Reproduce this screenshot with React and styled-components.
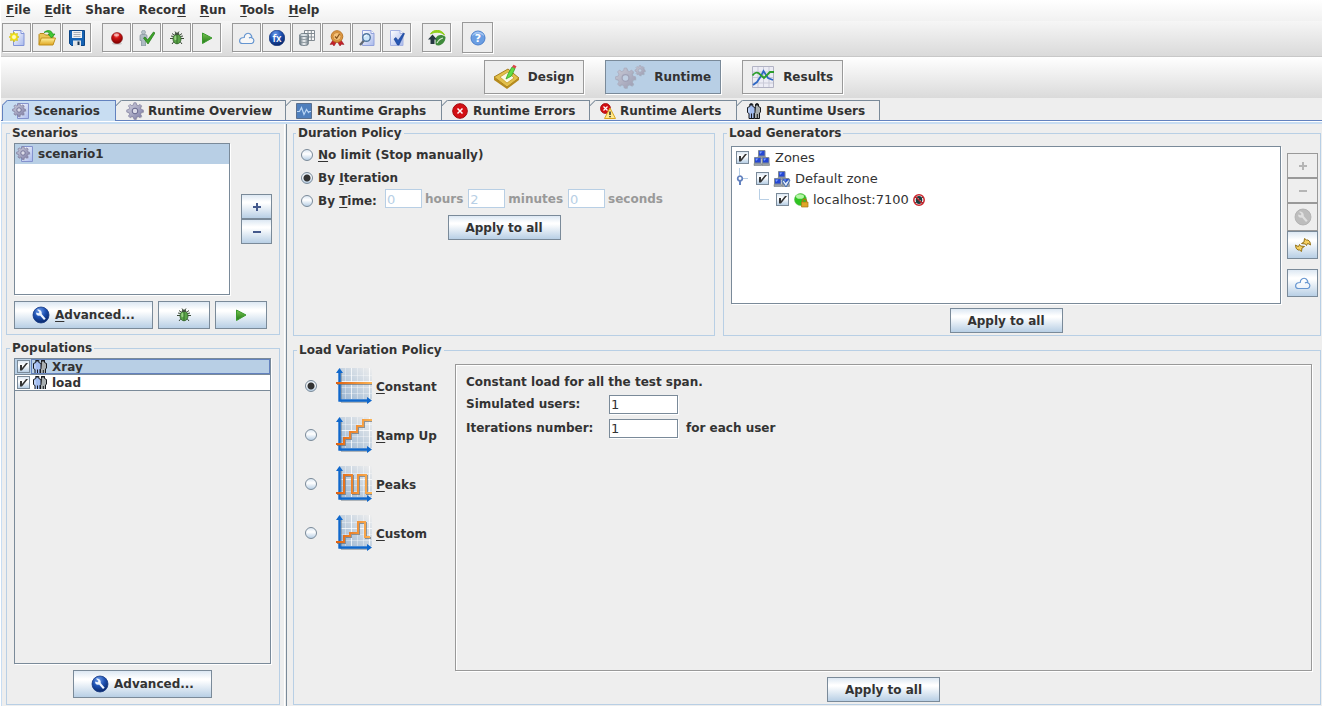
import React, { useState } from "react";
import styled, { createGlobalStyle, css } from "styled-components";

const GlobalStyle = createGlobalStyle`
  * { box-sizing: border-box; }
  body {
    margin: 0;
    background: #fff;
    color: #333;
    font: bold 12px/16px "DejaVu Sans", sans-serif;
  }
  button, input { font: inherit; color: inherit; }
  u { text-decoration-thickness: 1px; text-underline-offset: 2px; }
  svg { display: block; flex: none; }
`;

const line = "#7a8a99";
const pale = "#b8cfe5";
const grey = "#eeeeee";

/* ---------- layout ---------- */

const Page = styled.div`
  min-height: 100vh;
  display: flex;
  flex-direction: column;
  padding: 0 13px 4px 1px;
`;

const MenuBar = styled.nav`
  display: flex;
  align-items: flex-start;
  gap: 14px;
  height: 21px;
  padding: 2px 5px;
  background: linear-gradient(#fff, #f1f1f1);
`;

const MenuItem = styled.button`
  padding: 0;
  border: 0;
  background: none;
  line-height: 16px;
`;

const ToolBar = styled.div`
  display: flex;
  align-items: center;
  gap: 11px;
  height: 36px;
  padding: 0 1px 2px;
  background: linear-gradient(#f6f6f6, #dadada);
  border-bottom: 1px solid #c8c8c8;
`;

const ToolGroup = styled.div`
  display: flex;
  gap: 1px;
`;

const ToolButton = styled.button`
  display: grid;
  place-items: center;
  width: ${(p) => (p.$large ? 31 : 29)}px;
  height: ${(p) => (p.$large ? 31 : 29)}px;
  padding: 0;
  background: ${grey};
  border: 1px solid #999;
  box-shadow: 1px 1px #fff;
`;

const ModeBar = styled.div`
  display: flex;
  justify-content: center;
  align-items: center;
  gap: 21px;
  height: 41px;
  padding: 0 0 2px 4px;
  background: linear-gradient(#fff, #dadada);
`;

const ModeButton = styled.button`
  display: flex;
  align-items: center;
  gap: 8px;
  height: 34px;
  padding: 0 9px 0 8px;
  background: ${(p) => (p.$active ? pale : grey)};
  border: 1px solid ${(p) => (p.$active ? line : "#999")};
  box-shadow: 1px 1px #fff;
`;

const TabStrip = styled.div`
  display: flex;
  padding: 2px 0 0 1px;
  background: ${grey};
  border-bottom: 1px solid #6382bf;
`;

const Tab = styled.button`
  --edge: ${(p) => (p.$active ? "#6382bf" : line)};
  display: flex;
  align-items: center;
  gap: 4px;
  min-width: ${(p) => p.$w}px;
  height: 20px;
  padding: 1px 8px 0 10px;
  border: 0;
  border-right: 1px solid var(--edge);
  background:
    linear-gradient(135deg, ${grey} 0 3px, var(--edge) 4px, transparent 5px) 0 0 / 6px 6px no-repeat,
    linear-gradient(var(--edge), var(--edge)) 6px 0 / 100% 1px no-repeat,
    ${(p) => (p.$active ? "linear-gradient(#6382bf, #6382bf) 0 6px / 1px 100% no-repeat, #c8ddf2" : grey)};
  ${(p) => p.$active && css`
    height: 21px;
    margin-bottom: -1px;
    padding-bottom: 1px;
  `}
`;

const TabBody = styled.main`
  flex: 1;
  display: flex;
  background: ${grey};
  border-left: 1px solid #c8ddf2;
`;

const TabEdge = styled.div`
  height: 3px;
  border-top: 1px solid #fff;
  background: #c8ddf2;
`;

const Side = styled.aside`
  width: 282px;
  flex: none;
  display: flex;
  flex-direction: column;
  gap: 5px;
  padding: 1px 4px;
`;

const Divider = styled.div`
  width: 3px;
  flex: none;
  border-left: 1px solid #fff;
  border-right: 1px solid ${line};
`;

const Main = styled.section`
  flex: 1;
  min-width: 0;
  display: flex;
  flex-direction: column;
  gap: 6px;
  padding: 1px 1px 1px 6px;
`;

const Columns = styled.div`
  display: grid;
  grid-template-columns: 422fr 598fr;
  gap: 8px;
`;

const Group = styled.fieldset`
  display: flex;
  flex-direction: column;
  gap: 6px;
  min-width: 0;
  margin: 0;
  padding: ${(p) => p.$pad || "2px 8px 6px 7px"};
  border: 1px solid ${pale};
  ${(p) => p.$fill && "flex: 1;"}
  > legend {
    margin-left: -4px;
    padding: 0 2px;
  }
`;

const Row = styled.div`
  display: flex;
  align-items: ${(p) => p.$align || "center"};
  gap: ${(p) => p.$gap || 0}px;
  ${(p) => p.$fill && "flex: 1;"}
`;

const Stack = styled.div`
  display: flex;
  flex-direction: column;
  gap: ${(p) => p.$gap || 0}px;
  ${(p) => p.$fill && "flex: 1; min-width: 0;"}
  ${(p) => p.$top && `padding-top: ${p.$top}px;`}
`;

/* ---------- controls ---------- */

const Button = styled.button`
  display: flex;
  align-items: center;
  justify-content: center;
  gap: 5px;
  width: ${(p) => p.$w}px;
  height: ${(p) => p.$h || 28}px;
  padding: 0;
  border: 1px solid ${line};
  background: linear-gradient(#dde8f3, #fff 30%, #fff 35%, ${pale});
  &:disabled {
    color: #b5b5b5;
    border-color: #999;
    background: ${grey};
  }
`;

const SquareButton = styled(Button)`
  color: #44598c;
  margin-top: ${(p) => (p.$apart ? 10 : 0)}px;
`;

const ListBox = styled.ul`
  width: ${(p) => (p.$w ? p.$w + "px" : "auto")};
  height: ${(p) => (p.$h ? p.$h + "px" : "auto")};
  ${(p) => p.$fill && "flex: 1;"}
  margin: 0;
  padding: 0;
  list-style: none;
  background: ${(p) => (p.$plain ? grey : "#fff")};
  border: 1px solid ${line};
  box-shadow: 1px 1px #fff;
`;

const ScenarioItem = styled.li`
  display: flex;
  align-items: center;
  gap: 4px;
  height: 20px;
  padding: 0 1px;
  background: ${pale};
`;

const PopulationItem = styled.li`
  border-bottom: 1px solid ${line};
  background: ${(p) => (p.$active ? pale : "#fff")};
  label {
    display: flex;
    align-items: center;
    gap: 1px;
    height: 15px;
    padding-left: 2px;
  }
`;

const PopulationName = styled.span`
  flex: 1;
  display: flex;
  align-items: center;
  gap: 4px;
  height: 15px;
  padding-left: 1px;
  overflow: hidden;
  border: 1px solid ${(p) => (p.$active ? "#6382bf" : "transparent")};
`;

const Radio = styled.input.attrs({ type: "radio" })`
  appearance: none;
  flex: none;
  width: 12px;
  height: 12px;
  margin: 0;
  border: 1px solid ${line};
  border-radius: 50%;
  background: linear-gradient(#dde8f3, #fff 40%, ${pale});
  &:checked {
    background: radial-gradient(circle, #333 0 3px, transparent 4px), linear-gradient(#dde8f3, #fff 40%, ${pale});
  }
`;

const RadioLabel = styled.label`
  display: flex;
  align-items: center;
  gap: 5px;
  height: 23px;
`;

const CheckFrame = styled.span`
  position: relative;
  display: block;
  flex: none;
  width: 13px;
  height: 13px;
  input {
    appearance: none;
    display: block;
    width: 13px;
    height: 13px;
    margin: 0;
    border: 1px solid ${line};
    background: linear-gradient(#dde8f3, #fff 40%, ${pale});
  }
  svg {
    position: absolute;
    inset: 0;
    pointer-events: none;
    visibility: hidden;
  }
  input:checked + svg { visibility: visible; }
`;

const Field = styled.input`
  width: ${(p) => p.$w}px;
  height: 19px;
  padding: 1px 1px 0;
  border: 1px solid ${line};
  border-radius: 0;
  background: #fff;
  box-shadow: 1px 1px #fff;
  font-size: 13px;
  font-weight: normal;
  &:disabled {
    color: ${pale};
    border-color: ${pale};
    box-shadow: none;
  }
`;

const TimeLabel = styled.label`
  display: flex;
  align-items: center;
  gap: 3px;
  height: 19px;
  color: #999;
`;

const TimeRow = styled.div`
  display: flex;
  align-items: flex-start;
  gap: 5px;
  height: 20px;
  > ${TimeLabel}:nth-child(2) { margin-left: 3px; }
`;

const DurationOptions = styled(Stack)`
  padding-left: 1px;
`;

const Centered = styled.div`
  display: flex;
  justify-content: center;
`;

const Tree = styled.ul`
  height: 158px;
  margin: 0;
  padding: 0 4px;
  list-style: none;
  background: #fff;
  border: 1px solid ${line};
  box-shadow: 1px 1px #fff;
  font-size: 13px;
  font-weight: normal;
`;

const TreeItem = styled.li`
  display: flex;
  align-items: center;
  height: 21px;
  padding-left: ${(p) => (p.$depth ? (p.$depth - 1) * 20 : 0)}px;
  label {
    display: flex;
    align-items: center;
    gap: 4px;
  }
`;

const Shapes = styled.div`
  width: 154px;
  flex: none;
  display: flex;
  flex-direction: column;
  padding: 1px 0 0 4px;
`;

const ShapeLabel = styled.label`
  display: flex;
  align-items: center;
  height: 49px;
  span { padding: 2px 0 0 4px; }
  svg { margin-left: 19px; }
`;

const Detail = styled.div`
  flex: 1;
  padding: 9px 10px;
  border: 1px solid #999;
  box-shadow: 1px 1px #fff, inset 1px 1px #fff;
`;

const DetailGrid = styled.div`
  display: grid;
  grid-template-columns: 143px 69px auto;
  grid-auto-rows: 24px;
  align-items: center;
  margin-top: 2px;
  > span { padding-left: 8px; }
`;

/* ---------- icons ---------- */

const Defs = () => (
  <svg width="0" height="0" style={{ position: "absolute" }} aria-hidden="true">
    <defs>
      <linearGradient id="pageFill" x1="0" y1="0" x2="1" y2="1"><stop stopColor="#fff" /><stop offset="1" stopColor="#a9b9ec" /></linearGradient>
      <linearGradient id="gearFill" x1="0" y1="0" x2="1" y2="1"><stop stopColor="#d2d2de" /><stop offset="1" stopColor="#7c7ca6" /></linearGradient>
      <linearGradient id="gearLight" x1="0" y1="0" x2="1" y2="1"><stop stopColor="#c9cad6" /><stop offset="1" stopColor="#9a9cb2" /></linearGradient>
      <linearGradient id="greenFill" x1="0" y1="0" x2="0" y2="1"><stop stopColor="#79c351" /><stop offset="1" stopColor="#217a17" /></linearGradient>
      <radialGradient id="blueBall" cx=".4" cy=".25" r=".8"><stop stopColor="#6d9cea" /><stop offset=".5" stopColor="#1c4fb0" /><stop offset="1" stopColor="#07225f" /></radialGradient>
      <radialGradient id="redBall" cx=".45" cy=".25" r=".7"><stop stopColor="#ff8d84" /><stop offset=".4" stopColor="#cf1414" /><stop offset="1" stopColor="#860000" /></radialGradient>
      <linearGradient id="goldFill" x1="0" y1="0" x2="0" y2="1"><stop stopColor="#fff3a0" /><stop offset="1" stopColor="#dfa520" /></linearGradient>
      <linearGradient id="metalFill"><stop stopColor="#687680" /><stop offset=".5" stopColor="#f2f5f7" /><stop offset="1" stopColor="#76838c" /></linearGradient>
      <linearGradient id="plotFill" x1="1" y1="0" x2="0" y2="1"><stop stopColor="#eeeeee" /><stop offset=".5" stopColor="#c6d3e0" /><stop offset="1" stopColor="#98b4d2" /></linearGradient>
      <linearGradient id="traceFill" gradientUnits="userSpaceOnUse" x1="0" y1="0" x2="36" y2="0"><stop stopColor="#e0600e" /><stop offset="1" stopColor="#fbb455" /></linearGradient>
    </defs>
  </svg>
);

const Svg = ({ s = 16, w = s, h = s, children }) => (
  <svg width={w} height={h} viewBox={`0 0 ${w} ${h}`} fill="none" aria-hidden="true">{children}</svg>
);

/* An eight-toothed wheel: every tooth takes four points of the outline. */
const gearPath = (x, y, r) => {
  const points = [];
  for (let tooth = 0; tooth < 8; tooth += 1) {
    [[-0.3, 0.76], [-0.17, 1], [0.17, 1], [0.3, 0.76]].forEach(([turn, reach]) => {
      const angle = ((tooth + turn) * Math.PI) / 4;
      points.push(`${(x + r * reach * Math.cos(angle)).toFixed(2)} ${(y + r * reach * Math.sin(angle)).toFixed(2)}`);
    });
  }
  return `M${points.join("L")}Z`;
};

const Gear = ({ x, y, r, light }) => (
  <g>
    <path d={gearPath(x + 0.8, y + 0.8, r)} fill="#777" opacity=".3" />
    <path d={gearPath(x, y, r)} fill={light ? "url(#gearLight)" : "url(#gearFill)"} stroke={light ? "#a7a8ba" : "#7f7d9e"} strokeWidth=".7" />
    <circle cx={x} cy={y} r={r * 0.34} fill={light ? "#c0cfe2" : "#dcdce8"} stroke={light ? "#a0a2b6" : "#66668c"} strokeWidth={r * 0.12} />
  </g>
);

const NewIcon = () => (
  <Svg>
    <path d="M4.500 .5h7.500l3 3v12H4.500z" fill="url(#pageFill)" stroke="#8294d8" />
    <path d="M12 .5v3h3" fill="#fff" stroke="#8294d8" />
    <path d="M5 2l1 2 2.500-.5-.5 2.500L10 7l-2 1 .5 2.500L6 10l-1 2-1-2-2.500.5L2 8 0 7l2-1-.5-2.500L4 4z" fill="#f4e51d" stroke="#c9b800" strokeWidth=".6" />
    <circle cx="5" cy="7" r="2" fill="#fffbc0" />
  </Svg>
);

const OpenIcon = () => (
  <Svg w={18} h={16}>
    <path d="M1 14V4.500l1-1h4l1.500 1.500H15V14z" fill="#e8c556" stroke="#b88a1e" />
    <path d="M.8 15l2.500-7H17.500l-2.500 7z" fill="url(#goldFill)" stroke="#c08f1c" />
    <path d="M6 2.500C9-.5 14 0 14.500 4H17l-3.500 4L10 4h2C11.500 2 9 1.500 6 2.500z" fill="#41c935" stroke="#1e8d1a" strokeWidth=".7" />
  </Svg>
);

const SaveIcon = () => (
  <Svg>
    <path d="M.5.5h15v15H2.500l-2-2z" fill="#1563b4" stroke="#0c4585" />
    <path d="M3 1h10v7H3z" fill="#eef1f4" />
    <path d="M4.500 2.500h7M4.500 4.500h7M4.500 6.500h7" stroke="#abb2b9" />
    <path d="M4 10.500h8V16H4z" fill="#e3e6e9" />
    <path d="M8.500 11.500h2v3.500h-2z" fill="#17324f" />
  </Svg>
);

const RecordIcon = () => (
  <Svg>
    <ellipse cx="8" cy="13.500" rx="5" ry="1.300" fill="#c9c9c9" />
    <circle cx="8" cy="8" r="5.500" fill="url(#redBall)" stroke="#7d1010" strokeWidth=".6" />
    <ellipse cx="7.500" cy="5" rx="2.800" ry="1.400" fill="#fff" opacity=".45" />
  </Svg>
);

const CheckUserIcon = () => (
  <Svg>
    <circle cx="4.500" cy="2.300" r="2" fill="#b7c3ca" stroke="#84939c" strokeWidth=".6" />
    <path d="M1 6q0-1.500 1.500-1.500h4Q8 4.500 8 6v4.500H6.500V16h-4v-5.500H1z" fill="#aebbc3" stroke="#81909a" strokeWidth=".7" />
    <path d="M4.500 8l1.500-1 2.500 3 6-8 1.500 1L9 14z" fill="#3da629" stroke="#1f7414" strokeWidth=".7" />
  </Svg>
);

const BugIcon = () => (
  <Svg>
    <path d="M5 5L3 3.500M11 5l2-1.500M4 8.500H1M12 8.500h3M4.500 6.500L2 6M11.500 6.500L14 6M5 11.500l-2 2.500M11 11.500l2 2.500M7 3L6 1.500M9 3l1-1.500" stroke="#3b4a38" strokeWidth="1" />
    <ellipse cx="8" cy="9" rx="4" ry="4.800" fill="#5aa348" stroke="#2c5a25" strokeWidth=".8" />
    <path d="M5.500 5Q5.500 2.500 8 2.500t2.500 2.500z" fill="#445441" />
    <ellipse cx="6.500" cy="8" rx="1.300" ry="2.300" fill="#a8dc92" opacity=".8" />
    <path d="M8 5V14" stroke="#2b6423" strokeWidth=".8" />
  </Svg>
);

const PlayIcon = () => (
  <Svg><path d="M3.500 3l9.500 5-9.500 5.500z" fill="url(#greenFill)" stroke="#3a9a2c" /></Svg>
);

const CloudIcon = () => (
  <Svg>
    <path d="M3.500 13.500h9.300a2.900 2.900 0 0 0 .2-5.500C13 4.500 10 2.300 7.300 3.700 5.800 4.500 5.200 6 5.200 7.500 2.500 7.500.6 9 .6 11c0 1.500 1.200 2.500 2.900 2.500zM10 8.200q1.200-1.300 3-.4" stroke="#6595d0" strokeWidth="1.200" fill="#fff" fillOpacity=".5" />
  </Svg>
);

const FxIcon = () => (
  <Svg>
    <circle cx="8" cy="8" r="7.800" fill="url(#blueBall)" stroke="#0b2c74" strokeWidth=".6" />
    <text x="8" y="11.500" textAnchor="middle" fontFamily="Open Sans, sans-serif" fontWeight="600" fontSize="10" fill="#fff">fx</text>
  </Svg>
);

const DataIcon = () => (
  <Svg>
    <path d="M5.500.5h10v10h-10zM5.500 3.500h10M5.500 7h10M9 .5v10M12.300.5v10" fill="#fafafa" stroke="#828b92" />
    <path d="M.7 5v9c0 2 8.600 2 8.600 0V5z" fill="url(#metalFill)" stroke="#62717b" strokeWidth=".8" />
    <ellipse cx="5" cy="5" rx="4.300" ry="1.600" fill="#dce3e7" stroke="#62717b" strokeWidth=".8" />
    <path d="M.7 8c0 2 8.600 2 8.600 0M.7 11c0 2 8.600 2 8.600 0" stroke="#7c8991" strokeWidth=".8" />
  </Svg>
);

const MedalIcon = () => (
  <Svg>
    <path d="M4 10l-3 4.500 2.500-.3L5 16 7.500 12zM12 10l3 4.500-2.500-.3L11 16 8.500 12z" fill="#c4202a" stroke="#8c1119" strokeWidth=".5" />
    <circle cx="8" cy="6.500" r="5.800" fill="#e09a42" stroke="#b87426" strokeWidth="1" />
    <circle cx="8" cy="6.500" r="4" fill="#f5c27a" stroke="#c07a2a" strokeWidth=".7" />
    <path d="M6 6.500l1.700 1.800L10.500 4" stroke="#87531a" strokeWidth="1.300" />
  </Svg>
);

const SearchDocIcon = () => (
  <Svg>
    <path d="M3.500.5h8.500l3 3v12H3.500z" fill="url(#pageFill)" stroke="#92a2dc" />
    <path d="M12 .5v3h3" fill="#fff" stroke="#92a2dc" />
    <path d="M5 10.500L1 15" stroke="#626a73" strokeWidth="2.200" />
    <circle cx="7.500" cy="7.500" r="3.800" fill="#cde7fa" stroke="#52779e" strokeWidth="1.400" />
    <path d="M5.500 7q.5-1.800 2.300-2" stroke="#fff" />
  </Svg>
);

const CheckDocIcon = () => (
  <Svg>
    <path d="M1.500.5h9.500l3 3v12H1.500z" fill="url(#pageFill)" stroke="#a5b3e3" />
    <path d="M11 .5v3h3" fill="#fff" stroke="#a5b3e3" />
    <path d="M5 9l2-1.500 2 3L14.500 3l1 .6L10 15H8.500z" fill="#2456b5" stroke="#163d8c" strokeWidth=".6" />
  </Svg>
);

const GlobeIcon = () => (
  <Svg w={18} h={16}>
    <path d="M2.500 4C5-1 14-1 16.500 5 13 1.500 7 1.500 2.500 4z" fill="#93d21b" stroke="#8fce1a" />
    <path d="M7.500 8.500c2-4 6.500-4.500 10-1.500 0 4.500-3 8-7 8.500Q8 15.500 7.500 14z" fill="#3f8a3c" />
    <path d="M9 13Q11 9 15 8" stroke="#d8ecd0" strokeWidth="1.200" />
    <path d="M4.500 4.500L9 9.500H6.500v4.500h-4V9.500H0z" fill="#263842" />
  </Svg>
);

const HelpIcon = () => (
  <Svg>
    <circle cx="8" cy="8" r="7" fill="#6b9ee2" stroke="#4b80cc" />
    <path d="M2 6Q8 1 14 6Q14 2.500 8 1.500 3 2 2 6z" fill="#a4c6f2" />
    <text x="8" y="12" textAnchor="middle" fontSize="11" fontWeight="bold" fill="#fff">?</text>
  </Svg>
);

const DesignIcon = () => (
  <Svg w={27} h={26}>
    <path d="M1 13L15 5l11 9-12 9z" fill="#e3c04a" stroke="#a67e1a" />
    <path d="M7 13L15 8l6 6-7 5z" fill="#fbfae6" stroke="#c39a2c" strokeWidth=".8" />
    <path d="M1 13v3l13 9 12-9v-2.500L14 23z" fill="#b58a1c" />
    <path d="M13 15l2-5 4-7 3 1.500L18.500 12z" fill="#62dc42" stroke="#36a327" strokeWidth=".8" />
    <path d="M19 3L20.500.8l3 1.500L22.300 4.600z" fill="#d94747" />
  </Svg>
);

const RuntimeIcon = () => (
  <Svg w={32} h={24}><Gear x={11.500} y={13} r={10} light /><Gear x={26} y={5.500} r={5} light /></Svg>
);

const ResultsIcon = () => (
  <Svg s={24}>
    <path d="M1.500 1.500h21v21h-21z" fill="#ececf5" stroke="#b2b3c4" />
    <path d="M2 7h20M2 12.500h20M2 18h20M7 2v20M12.500 2v20M18 2v20" stroke="#c9cad8" />
    <path d="M2 20l4-3 4-6 2.500-5 4.500 7 5 2" stroke="#2e68c4" strokeWidth="1.800" />
    <path d="M1.500 10.500Q5 6 8 8.500L13 13l4-4 2-2h4" stroke="#2c9e2c" strokeWidth="1.800" />
  </Svg>
);

const ScenarioIcon = () => (
  <Svg s={18}>
    <path d="M5.500 1.500h11v15h-11z" fill="url(#pageFill)" stroke="#8492cd" />
    <Gear x={7} y={8} r={6.500} />
  </Svg>
);

const GearIcon = () => <Svg s={18}><Gear x={9} y={9} r={8.300} /></Svg>;

const GraphIcon = () => (
  <Svg w={17} h={16}>
    <path d="M.5.500h15v15H.5z" fill="#4f7fbd" stroke="#5a708f" />
    <path d="M1 8.500h2.500l2-4 2.500 7 2.500-5 2 3 1-1H15" stroke="#b9d5f4" strokeWidth="1.200" />
  </Svg>
);

const ErrorIcon = () => (
  <Svg w={17} h={16}>
    <circle cx="8" cy="8" r="7.300" fill="#d30f14" stroke="#a3080c" />
    <path d="M5.500 5.500l5 5M10.500 5.500l-5 5" stroke="#fff" strokeWidth="1.500" />
  </Svg>
);

const AlertIcon = () => (
  <Svg>
    <circle cx="5.500" cy="5.500" r="5" fill="#d30f14" stroke="#9e070b" strokeWidth=".8" />
    <path d="M3.500 3.500l4 4M7.500 3.500l-4 4" stroke="#fff" strokeWidth="1.200" />
    <path d="M10 5l5.500 10.500h-11z" fill="#ffe98a" stroke="#d9a520" />
    <path d="M10 8.500v3.500M10 13v1.300" stroke="#222" strokeWidth="1.400" />
  </Svg>
);

const UsersIcon = () => (
  <Svg w={15} h={16}>
    <g stroke="#16191d" strokeWidth="1" strokeLinejoin="round">
      <path d="M8.500 3.500V1.200q1.500-1.400 3 0v2.300l2 1V9l-1 1v5.500h-5V9z" fill="#a9afb0" />
      <path d="M2.800 3.500V1.200q1.500-1.400 3 0v2.300l2.200 1V9.500l-1 1v5h-5v-5l-1.500-1V4.500z" fill="#a3bdf0" />
      <path d="M4.500 10.500v5M10.300 11v4.500" />
      <path d="M3 1.800h2.500M8.700 1.800h2.600" strokeWidth="1.500" />
    </g>
    <path d="M2 5.500v4" stroke="#d5e3fb" />
  </Svg>
);

const WrenchIcon = ({ off }) => (
  <Svg s={18}>
    <circle cx="9" cy="9" r="8" fill={off ? "#bdbdbd" : "url(#blueBall)"} stroke={off ? "#adadad" : "#153a85"} strokeWidth=".8" />
    <path d="M5 3.700l2.500 2.200-.9 1.400-2.500-.9C4 9 6 10.200 8 9.500l4 4.500 1.700-1.300-4-4.600C10.300 5.500 8 3 5 3.700z" fill={off ? "#e0e0e0" : "#eef5ff"} />
  </Svg>
);

const ZonesIcon = ({ checked }) => (
  <Svg w={18} h={16}>
    {[[5, 0], [1, 7], [9, 7]].map(([x, y]) => (
      <g key={`${x}${y}`} transform={`translate(${x} ${y})`}>
        <path d="M0 6.500h7.500v2H0z" fill="#9ba2a8" stroke="#656d73" strokeWidth=".5" />
        <path d="M.5.5h6.500v5.500H.5z" fill="#2447d4" stroke="#7c8796" />
        <path d="M1.500 1.500h3L2 4z" fill="#7ca0ff" />
      </g>
    ))}
    {checked && <path d="M9 10l2-1 1.500 2.500L16 8.500l1 .5-4 7z" fill="#dfe9fb" stroke="#416bb0" />}
  </Svg>
);

const HostIcon = () => (
  <Svg>
    <circle cx="7.500" cy="7.500" r="6" fill="#2fc422" stroke="#5dbb53" strokeWidth=".6" />
    <ellipse cx="7" cy="4.500" rx="4" ry="2.300" fill="#b4f5a5" />
    <path d="M9.500 10V8.500q2.500-3 4 0V10" stroke="#a67916" strokeWidth="1.300" />
    <path d="M8.500 10H15v5H8.500z" fill="#dfa629" stroke="#a67916" strokeWidth=".7" />
  </Svg>
);

const NoBugIcon = () => (
  <Svg s={12}>
    <path d="M2 3l8 6M10 3L2 9" stroke="#183637" />
    <ellipse cx="6" cy="6" rx="3.300" ry="4" fill="#1c3c3e" />
    <path d="M5 4h1v1H5zM7 6h1v1H7z" fill="#7fd0d0" />
    <circle cx="6" cy="6" r="5.200" stroke="#c9242b" strokeWidth="1.500" />
    <path d="M2.300 2.300l7.400 7.400" stroke="#c9242b" strokeWidth="1.300" />
  </Svg>
);

const RefreshIcon = () => (
  <Svg>
    <path d="M6.500 6.500L9 5l.5-3.500L11.500 3h1.500q2.500 1 2.500 5l-1.500-1-1.500-.5-1 2-1-1.500z" fill="#f6d060" stroke="#94721a" />
    <path d="M9.500 9.500L7 11l-.5 3.500L4.500 13H3Q.5 12 .5 8L2 9l1.500.5 1-2 1 1.500z" fill="#f6d060" stroke="#94721a" />
  </Svg>
);

const PlusIcon = () => <Svg s={10}><path d="M1 5h8M5 1v8" stroke="currentColor" strokeWidth="2" /></Svg>;
const MinusIcon = () => <Svg s={10}><path d="M1 5h8" stroke="currentColor" strokeWidth="2" /></Svg>;

const ToggleLine = () => (
  <Svg w={20} h={21}>
    <path d="M3.500 0v7M6 10.500h6" stroke={pale} />
    <path d="M4 13v4" stroke="#6382bf" strokeWidth="2" />
    <circle cx="4" cy="10.500" r="2.300" stroke="#6382bf" strokeWidth="1.700" fill="#fff" />
  </Svg>
);

const LeafLine = () => <Svg w={20} h={21}><path d="M3.500 0v10.500H13" stroke={pale} /></Svg>;

const traces = {
  Constant: "M0 15h35.900v.01",
  "Ramp Up": "M0 27h8v-6h6v-6h7v-6h6V3h9",
  Peaks: "M0 27h8V9h8v18h6V9h8v18h6",
  Custom: "M0 27h8v-6h6v-3h8V7h7v15h5",
};

const PlotIcon = ({ shape }) => (
  <Svg w={36} h={36}>
    <path d="M4 0h32v31H4z" fill="url(#plotFill)" />
    <path d="M4 7.500h32M4 19.500h32M4 25.500h32M9.500 0v31M21.500 0v31M27.500 0v31" stroke="#fff" strokeOpacity=".35" />
    <path d="M4 13.500h32M15.500 0v31M33.500 0v31" stroke="#fff" strokeOpacity=".75" />
    <path d="M5 5v29h28" stroke="#6f7a84" />
    <path d="M3.500 33.500V4M2.500 32.500h30" stroke="#1068cc" strokeWidth="2.400" />
    <path d="M0 5L3.500 0 7 5zM31 29l5 3.500-5 3.500z" fill="#1068cc" />
    <path d={traces[shape]} stroke="#6b6f74" strokeOpacity=".7" strokeWidth="2" transform="translate(1 1)" />
    <path d={traces[shape]} stroke="url(#traceFill)" strokeWidth="2" />
  </Svg>
);

const CheckBox = (props) => (
  <CheckFrame>
    <input type="checkbox" defaultChecked {...props} />
    <Svg s={13}><path d="M3 5h2v3l4-5h2L5 10.500H3z" fill="#333" /></Svg>
  </CheckFrame>
);

/* ---------- screen ---------- */

const menus = [["", "F", "ile"], ["", "E", "dit"], ["Share", "", ""], ["Recor", "d", ""], ["", "R", "un"], ["", "T", "ools"], ["", "H", "elp"]];

const tools = [
  [["New", NewIcon], ["Open", OpenIcon], ["Save", SaveIcon]],
  [["Record", RecordIcon], ["Check user", CheckUserIcon], ["Debug", BugIcon], ["Run", PlayIcon]],
  [["Cloud", CloudIcon], ["Functions", FxIcon], ["Data", DataIcon], ["Certificates", MedalIcon], ["Find", SearchDocIcon], ["Validate", CheckDocIcon]],
  [["Web", GlobeIcon]],
];

const modes = [["Design", DesignIcon], ["Runtime", RuntimeIcon], ["Results", ResultsIcon]];

const tabs = [
  ["Scenarios", ScenarioIcon, 114],
  ["Runtime Overview", GearIcon, 170],
  ["Runtime Graphs", GraphIcon, 156],
  ["Runtime Errors", ErrorIcon, 148],
  ["Runtime Alerts", AlertIcon, 147],
  ["Runtime Users", UsersIcon, 143],
];

const populations = ["Xray", "load"];

const shapes = ["Constant", "Ramp Up", "Peaks", "Custom"];

export default function App() {
  const [shape, setShape] = useState("Constant");
  return (
    <>
      <GlobalStyle />
      <Defs />
      <Page>
        <MenuBar>
          {menus.map(([a, key, b]) => (
            <MenuItem key={a + key + b}>{a}{key && <u>{key}</u>}{b}</MenuItem>
          ))}
        </MenuBar>
        <ToolBar>
          {tools.map((group, i) => (
            <ToolGroup key={i}>
              {group.map(([name, Icon]) => <ToolButton key={name} aria-label={name}><Icon /></ToolButton>)}
            </ToolGroup>
          ))}
          <ToolButton $large aria-label="Help contents"><HelpIcon /></ToolButton>
        </ToolBar>
        <ModeBar>
          {modes.map(([name, Icon]) => (
            <ModeButton key={name} $active={name === "Runtime"}><Icon />{name}</ModeButton>
          ))}
        </ModeBar>
        <TabStrip role="tablist">
          {tabs.map(([name, Icon, width], i) => (
            <Tab key={name} role="tab" aria-selected={i === 0} $active={i === 0} $w={width}><Icon />{name}</Tab>
          ))}
        </TabStrip>
        <TabEdge />
        <TabBody>
          <Side>
            <Group $pad="2px 7px 5px 7px">
              <legend>Scenarios</legend>
              <Row $gap={11}>
                <ListBox $w={217} $h={152}>
                  <ScenarioItem><ScenarioIcon />scenario1</ScenarioItem>
                </ListBox>
                <Stack>
                  <SquareButton $w={31} $h={25} aria-label="Add scenario"><PlusIcon /></SquareButton>
                  <SquareButton $w={31} $h={25} aria-label="Remove scenario"><MinusIcon /></SquareButton>
                </Stack>
              </Row>
              <Row $gap={5}>
                <Button $w={139}><WrenchIcon /><span><u>A</u>dvanced...</span></Button>
                <Button $w={52} aria-label="Check"><BugIcon /></Button>
                <Button $w={52} aria-label="Start"><PlayIcon /></Button>
              </Row>
            </Group>
            <Group $fill>
              <legend>Populations</legend>
              <ListBox $fill $plain>
                {populations.map((name, i) => (
                  <PopulationItem key={name} $active={i === 0}>
                    <label><CheckBox /><PopulationName $active={i === 0}><UsersIcon />{name}</PopulationName></label>
                  </PopulationItem>
                ))}
              </ListBox>
              <Centered><Button $w={139}><WrenchIcon />Advanced...</Button></Centered>
            </Group>
          </Side>
          <Divider />
          <Main>
            <Columns>
              <Group $pad="2px 6px">
                <legend>Duration Policy</legend>
                <DurationOptions>
                  <RadioLabel><Radio name="duration" /><span><u>N</u>o limit (Stop manually)</span></RadioLabel>
                  <RadioLabel><Radio name="duration" defaultChecked /><span>By <u>I</u>teration</span></RadioLabel>
                  <TimeRow>
                    <RadioLabel><Radio name="duration" /><span>By <u>T</u>ime:</span></RadioLabel>
                    {[["hours", 0], ["minutes", 2], ["seconds", 0]].map(([unit, value]) => (
                      <TimeLabel key={unit}><Field $w={37} disabled defaultValue={value} />{unit}</TimeLabel>
                    ))}
                  </TimeRow>
                </DurationOptions>
                <Centered><Button $w={113} $h={25}>Apply to all</Button></Centered>
              </Group>
              <Group $pad="5px 2px 2px 7px">
                <legend>Load Generators</legend>
                <Row $gap={6} $align="flex-start">
                  <Stack $fill $gap={4}>
                    <Tree>
                      <TreeItem><label><CheckBox /><ZonesIcon />Zones</label></TreeItem>
                      <TreeItem $depth={1}><ToggleLine /><label><CheckBox /><ZonesIcon checked />Default zone</label></TreeItem>
                      <TreeItem $depth={2}><LeafLine /><label><CheckBox /><HostIcon />localhost:7100<NoBugIcon /></label></TreeItem>
                    </Tree>
                    <Centered><Button $w={113} $h={25}>Apply to all</Button></Centered>
                  </Stack>
                  <Stack $top={7}>
                    <SquareButton $w={31} $h={25} disabled aria-label="Add generator"><PlusIcon /></SquareButton>
                    <SquareButton $w={31} $h={25} disabled aria-label="Remove generator"><MinusIcon /></SquareButton>
                    <SquareButton $w={31} disabled aria-label="Configure"><WrenchIcon off /></SquareButton>
                    <SquareButton $w={31} aria-label="Refresh"><RefreshIcon /></SquareButton>
                    <SquareButton $w={31} $apart aria-label="Cloud generators"><CloudIcon /></SquareButton>
                  </Stack>
                </Row>
              </Group>
            </Columns>
            <Group $fill $pad="2px 8px 2px 7px">
              <legend>Load Variation Policy</legend>
              <Row $fill $align="stretch">
                <Shapes>
                  {shapes.map((name) => (
                    <ShapeLabel key={name}>
                      <Radio name="shape" checked={shape === name} onChange={() => setShape(name)} />
                      <PlotIcon shape={name} />
                      <span><u>{name[0]}</u>{name.slice(1)}</span>
                    </ShapeLabel>
                  ))}
                </Shapes>
                <Stack $fill $gap={6} $top={4}>
                  <Detail>
                    <div>Constant load for all the test span.</div>
                    <DetailGrid>
                      <label htmlFor="users">Simulated users:</label>
                      <Field id="users" $w={69} defaultValue="1" />
                      <span />
                      <label htmlFor="iterations">Iterations number:</label>
                      <Field id="iterations" $w={69} defaultValue="1" />
                      <span>for each user</span>
                    </DetailGrid>
                  </Detail>
                  <Centered><Button $w={113} $h={25}>Apply to all</Button></Centered>
                </Stack>
              </Row>
            </Group>
          </Main>
        </TabBody>
      </Page>
    </>
  );
}
